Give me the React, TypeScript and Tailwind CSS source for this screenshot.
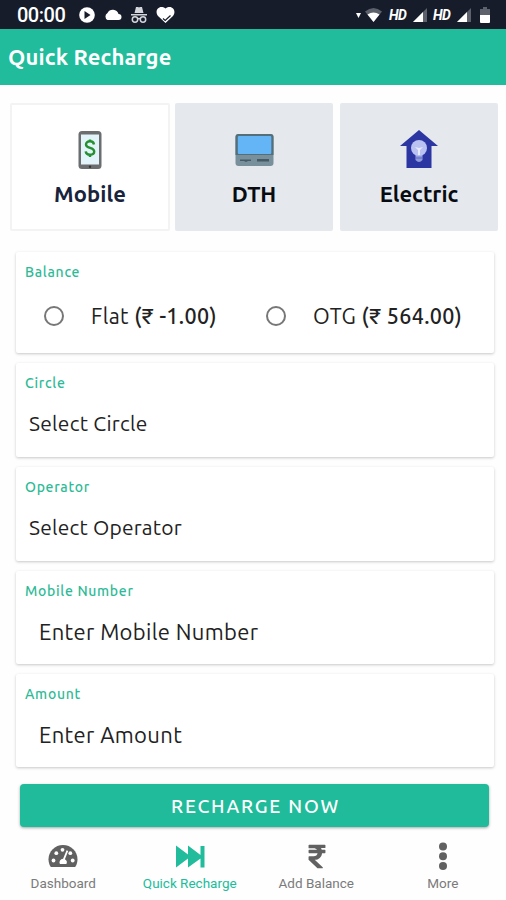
import React from 'react';
import { FaRupeeSign } from 'react-icons/fa';

const StatusIcons: React.FC = () => (
  <div className="flex items-center">
    <svg className="ml-[14px] w-4 h-4" viewBox="0 0 16 16">
      <circle cx="8" cy="8" r="7.800" fill="#fff" />
      <path d="M5.500 4v8l6-4z" fill="#171c2a" />
    </svg>
    <svg className="ml-[9px] w-[18px] h-3" viewBox="0 0 18 12" fill="#fff">
      <path d="M14.500 5A6 6 0 0 0 3.500 4 4 4 0 0 0 3.500 11H14.500A3 3 0 0 0 14.500 5z" />
    </svg>
    <svg className="ml-[8px] w-[18px] h-[18px]" viewBox="0 0 18 18" fill="#d4d6dc">
      <path d="M4.500 7 6 1h2l1 .6L10 1h2l1.500 6zM1 8h16v1.500H1z" />
      <g fill="none" stroke="#d4d6dc" strokeWidth="1.500">
        <circle cx="5" cy="13.500" r="2.700" />
        <circle cx="13" cy="13.500" r="2.700" />
        <path d="M7.700 13q1.300-1 2.600 0" />
      </g>
    </svg>
    <svg className="ml-[8px] w-[19px] h-[18px]" viewBox="0 0 19 18">
      <path d="M9.500 17 2 10C-2 5 3-2 9.500 2.500 16-2 21 5 17 10z" fill="#fff" />
      <path d="m7 12.500 2.200 2 5.300-5" fill="none" stroke="#171c2a" strokeWidth="1.200" />
    </svg>
  </div>
);

const Signal: React.FC<{ className: string }> = ({ className }) => (
  <svg className={className} viewBox="0 0 14 14">
    <path d="M14 0v14H0z" fill="#5d616b" />
    <path d="M10 4v10H0z" fill="#fff" />
  </svg>
);

const MobileIcon = () => (
  <svg className="w-[24px] h-[40px]" viewBox="0 0 24 40">
    <rect x=".5" y="1" width="23" height="38" rx="3.500" fill="#6b6d6f" />
    <rect x="3" y="4.500" width="18" height="30" fill="#e3f3fa" />
    <circle cx="12" cy="36.800" r="1.200" fill="#333" />
    <path
      d="M16 14.500c-.4-2.200-1.900-3.200-4-3.200-2.300 0-4 1.200-4 3.200 0 4.500 8.200 2.400 8.200 7 0 2-1.700 3.200-4.200 3.200-2.400 0-4-1.100-4.300-3.400M12 9.500v2M12 24.500v2.500"
      fill="none"
      stroke="#259030"
      strokeWidth="2.400"
    />
  </svg>
);

const DthIcon = () => (
  <svg className="w-[39px] h-[40px]" viewBox="0 0 39 40">
    <rect x=".5" y="4" width="38" height="32" rx="3" fill="#78909c" />
    <path d="M3.500 4h32a3 3 0 0 1 3 3v18H.5V7a3 3 0 0 1 3-3z" fill="#546e7a" />
    <rect x="2.800" y="6" width="33.500" height="18" rx="1" fill="#64b5f6" />
    <path d="M5 29.500h11v1.500H13l-2 1-2-1H5zM22 29h12v2.500H22z" fill="#455a64" />
  </svg>
);

const ElectricIcon = () => (
  <svg className="w-[38px] h-[40px]" viewBox="0 0 38 40">
    <path d="M19 0 38 16h-6.500v22h-25V16H0z" fill="#2c36a3" />
    <path d="M15.500 25h7v5q-3.500 4-7 0z" fill="#8f9bdd" />
    <circle cx="19" cy="18" r="8" fill="#b9c2f1" />
    <path d="M15 17l3 3v5h2v-5l3-3-4 1z" fill="#e8ebff" />
    <path d="M15.500 28h7" stroke="#5c6bc0" strokeWidth="1" />
  </svg>
);

const DashboardIcon = () => (
  <svg className="w-[30px] h-[30px]" viewBox="0 0 30 30">
    <path d="M15 4C7 4 .5 10.300 .5 18.200c0 2.700.7 5.200 2 7.300.3.400.6.500 1 .5h23c.4 0 .7-.1 1-.5 1.300-2.100 2-4.600 2-7.300C29.500 10.300 23 4 15 4z" fill="#616161" />
    <g fill="#fff">
      <circle cx="5.500" cy="19.500" r="1.900" />
      <circle cx="8.300" cy="12.200" r="1.900" />
      <circle cx="14.500" cy="8.800" r="1.900" />
      <circle cx="22.300" cy="12.200" r="1.900" />
      <circle cx="24.700" cy="19.500" r="1.900" />
      <path d="m18.600 9.300-3.500 8.400a3.600 3.600 0 0 0-3.200 5.300h6.500a3.600 3.600 0 0 0-1.500-4.700l3.300-8.400z" />
    </g>
  </svg>
);

const tabs = [
  { label: 'Mobile', icon: <MobileIcon />, box: 'w-[160px] bg-white border-2 border-[#f3f3f3] mr-[5px]', text: 'text-[#18233c] tracking-[0.1px]' },
  { label: 'DTH', icon: <DthIcon />, box: 'w-[158px] bg-[#e5e8ec] mr-[7px]', text: 'text-[#080c12] tracking-[-0.1px]' },
  { label: 'Electric', icon: <ElectricIcon />, box: 'w-[158px] bg-[#e5e8ec]', text: 'text-[#080c12] tracking-[0px]' },
];

const Card: React.FC<{ title: string; className: string; children: React.ReactNode }> = ({ title, className, children }) => (
  <section className={`bg-white rounded-[2px] shadow-[0_1px_3px_rgba(0,0,0,0.22)] px-[9px] ${className}`}>
    <h2 className="pt-[10px] text-[14px] leading-5 font-medium tracking-[0.7px] text-[#2dba96]">{title}</h2>
    {children}
  </section>
);

const App: React.FC = () => {
  return (
    <div className="flex flex-col w-[506px] h-[900px] overflow-hidden bg-[#fefefe] font-['Ubuntu','Noto_Sans',sans-serif] text-[#222]">
      <div className="flex items-center h-[29px] bg-[#171c2a] text-white font-['Roboto',sans-serif]">
        <span className="ml-[17px] w-[48px] text-[20px] leading-none font-medium tracking-[-0.5px]">00:00</span>
        <StatusIcons />
        <div className="flex items-center ml-auto mr-4 mt-[1px]">
          <svg className="w-[5px] h-[5px]" viewBox="0 0 5 5" fill="#fff"><path d="M0 0h5L2.500 5z" /></svg>
          <svg className="ml-1 w-[17px] h-[14px]" viewBox="0 0 17 14">
            <path d="M0 3.500Q8.500-3.500 17 3.500L8.500 14z" fill="#5d616b" />
            <path d="M2.500 6.500Q8.500 2.500 14.500 6.500L8.500 14z" fill="#fff" />
          </svg>
          <span className="ml-[7px] w-[18px] text-[14px] leading-none font-bold italic tracking-[-0.6px]">HD</span>
          <Signal className="ml-[6px] w-[14px] h-[14px]" />
          <span className="ml-[6px] w-[18px] text-[14px] leading-none font-bold italic tracking-[-0.6px]">HD</span>
          <Signal className="ml-[6px] w-[14px] h-[14px]" />
          <svg className="ml-[9px] w-[10px] h-4" viewBox="0 0 10 16">
            <path d="M3 0h4v2h3v6H0V2h3z" fill="#5d616b" />
            <path d="M0 8h10v7a1 1 0 0 1-1 1H1a1 1 0 0 1-1-1z" fill="#fff" />
          </svg>
        </div>
      </div>

      <header className="flex items-center h-[56px] pl-2 bg-[#20bc9b]">
        <h1 className="text-[22px] leading-none font-bold tracking-[0.15px] text-white">Quick Recharge</h1>
      </header>

      <div className="flex mt-[18px] ml-[10px] h-[128px]">
        {tabs.map((tab) => (
          <div key={tab.label} className={`flex flex-col items-center justify-center rounded-[2px] pt-[6px] ${tab.box}`}>
            {tab.icon}
            <span className={`mt-[8px] text-[22px] leading-8 font-bold ${tab.text}`}>{tab.label}</span>
          </div>
        ))}
      </div>

      <main className="flex flex-col gap-[10px] mt-[21px] ml-4 mr-3">
        <Card title="Balance" className="h-[101px]">
          <div className="flex items-center mt-[18px] pl-[19px] text-[21.5px] leading-8 tracking-[0.35px]">
            <span className="w-[20px] h-[20px] rounded-full border-2 border-[#777]" />
            <span className="ml-[27px] w-[175px] whitespace-nowrap">Flat <b className="font-medium">(₹ -1.00)</b></span>
            <span className="w-[20px] h-[20px] rounded-full border-2 border-[#777]" />
            <span className="ml-[27px] whitespace-nowrap">OTG <b className="font-medium">(₹ 564.00)</b></span>
          </div>
        </Card>
        <Card title="Circle" className="h-[94px]">
          <p className="mt-[14px] pl-[4px] text-[21px] leading-8 tracking-[0.25px]">Select Circle</p>
        </Card>
        <Card title="Operator" className="h-[94px]">
          <p className="mt-[14px] pl-[4px] text-[21px] leading-8 tracking-[0.2px]">Select Operator</p>
        </Card>
        <Card title="Mobile Number" className="h-[93px]">
          <p className="mt-[15px] pl-[14px] text-[22px] leading-8 tracking-[0.35px]">Enter Mobile Number</p>
        </Card>
        <Card title="Amount" className="h-[93px]">
          <p className="mt-[15px] pl-[14px] text-[22px] leading-8 tracking-[0.35px]">Enter Amount</p>
        </Card>
      </main>

      <button className="shrink-0 mt-[17px] ml-5 w-[469px] h-[43px] pt-px pl-[2px] rounded-[4px] bg-[#1fbb9a] text-white text-[19px] font-medium tracking-[1.8px] shadow-[0_1px_3px_rgba(0,0,0,0.35)]">
        RECHARGE NOW
      </button>

      <nav className="grid grid-cols-4 mt-[14px] text-[13.5px] leading-4 text-[#7b7b7b] font-['Roboto',sans-serif]">
        <div className="flex flex-col items-center gap-1">
          <DashboardIcon />
          <span>Dashboard</span>
        </div>
        <div className="flex flex-col items-center gap-1 text-[#20bc9b]">
          <svg className="w-[30px] h-[30px]" viewBox="0 0 30 30" fill="currentColor">
            <path d="M1 4.500 13 13.500V4.500L25.500 14V5H29.500v21.500h-4v-9L13 26.500v-9L1 26.500z" />
          </svg>
          <span>Quick Recharge</span>
        </div>
        <div className="flex flex-col items-center gap-1">
          <FaRupeeSign className="w-[30px] h-[27px] mt-[2px] mb-px ml-[2px] text-[#616161]" />
          <span>Add Balance</span>
        </div>
        <div className="flex flex-col items-center gap-1">
          <svg className="w-[30px] h-[30px]" viewBox="0 0 30 30" fill="#616161">
            <circle cx="15" cy="5.500" r="4" />
            <circle cx="15" cy="15.300" r="4" />
            <circle cx="15" cy="25" r="4" />
          </svg>
          <span>More</span>
        </div>
      </nav>
    </div>
  );
};

export default App;
